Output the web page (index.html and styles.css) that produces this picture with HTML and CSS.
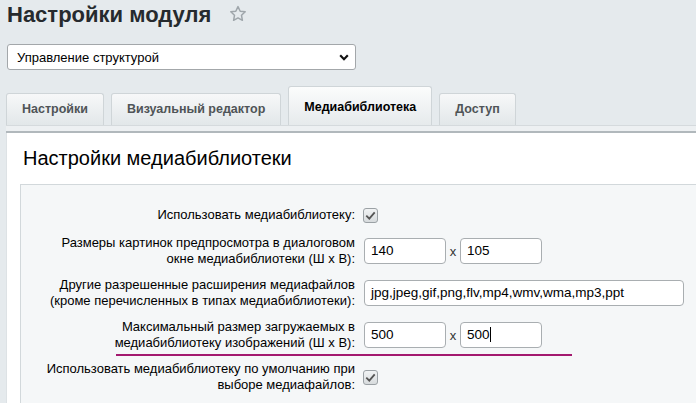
FILE: index.html
```html
<!DOCTYPE html>
<html lang="ru">
<head>
<meta charset="utf-8">
<title>Настройки модуля</title>
<link rel="stylesheet" href="styles.css">
</head>
<body>
<div class="page">
  <div class="title-row">
    <h1 class="title">Настройки модуля</h1>
    <svg class="star" width="18" height="18" viewBox="0 0 18 18" aria-hidden="true">
      <path d="M9 1.6l2.2 4.6 5 .6-3.7 3.5.9 5-4.4-2.4-4.4 2.4.9-5L1.8 6.8l5-.6z" fill="none" stroke="#9fa6ab" stroke-width="1.5" stroke-linejoin="round"/>
    </svg>
  </div>
  <div class="select">
    <span class="select-text">Управление структурой</span>
    <svg class="chevron" width="10" height="7" viewBox="0 0 10 7" aria-hidden="true">
      <path d="M1.2 1.3L5 5.2l3.8-3.9" fill="none" stroke="#111" stroke-width="2.2"/>
    </svg>
  </div>
  <div class="tabs">
    <div class="tab">Настройки</div>
    <div class="tab">Визуальный редактор</div>
    <div class="tab active">Медиабиблиотека</div>
    <div class="tab">Доступ</div>
  </div>
  <div class="tab-strip"></div>
  <div class="content">
    <h2 class="heading">Настройки медиабиблиотеки</h2>
    <div class="panel">
      <div class="row first">
        <div class="label">Использовать медиабиблиотеку:</div>
        <div class="value"><span class="checkbox"><svg width="11" height="9" viewBox="0 0 11 9"><path d="M1.3 4.6l3 3 5.4-6.2" fill="none" stroke="#555" stroke-width="1.8"/></svg></span></div>
      </div>
      <div class="row">
        <div class="label">Размеры картинок предпросмотра в диалоговом<br>окне медиабиблиотеки (Ш x В):</div>
        <div class="value"><span class="field small">140</span><span class="times">x</span><span class="field small">105</span></div>
      </div>
      <div class="row">
        <div class="label">Другие разрешенные расширения медиафайлов<br>(кроме перечисленных в типах медиабиблиотеки):</div>
        <div class="value"><span class="field wide">jpg,jpeg,gif,png,flv,mp4,wmv,wma,mp3,ppt</span></div>
      </div>
      <div class="row marked">
        <div class="label">Максимальный размер загружаемых в<br>медиабиблиотеку изображений (Ш x В):</div>
        <div class="value"><span class="field small">500</span><span class="times">x</span><span class="field small">500<span class="caret"></span></span></div>
        <span class="mark"></span>
      </div>
      <div class="row">
        <div class="label">Использовать медиабиблиотеку по умолчанию при<br>выборе медиафайлов:</div>
        <div class="value"><span class="checkbox"><svg width="11" height="9" viewBox="0 0 11 9"><path d="M1.3 4.6l3 3 5.4-6.2" fill="none" stroke="#555" stroke-width="1.8"/></svg></span></div>
      </div>
    </div>
  </div>
</div>
</body>
</html>
```
FILE: styles.css
```css
* { box-sizing: border-box; }
html, body { margin: 0; padding: 0; }
body {
  background: #e5eaed;
  font-family: "Liberation Sans", Arial, sans-serif;
  font-size: 13px;
  color: #000;
  height: 403px;
  overflow: hidden;
}
.page { padding-left: 6px; width: 720px; }

.title-row { display: flex; align-items: center; height: 30px; margin-left: 1px; }
.title {
  margin: 0;
  font-size: 22px;
  line-height: 30px;
  font-weight: bold;
  color: #262a2e;
}
.star { margin-left: 18px; margin-top: -2px; }

.select {
  margin: 14px 0 0 1px;
  width: 349px;
  height: 26px;
  background: #fff;
  border: 1px solid #a3a7aa;
  border-radius: 3px;
  display: flex;
  align-items: center;
  justify-content: space-between;
  padding: 0 6px 0 9px;
}
.select-text { font-size: 13px; color: #000; }

.tabs {
  margin-top: 16px;
  display: flex;
  align-items: flex-end;
  gap: 7px;
}
.tab {
  height: 32px;
  line-height: 31px;
  padding: 0 15px;
  border: 1px solid #cfd5d8;
  border-bottom: none;
  border-radius: 3px 3px 0 0;
  background: linear-gradient(#f7f8f9, #e2e7e9);
  font-weight: bold;
  font-size: 12.5px;
  color: #4f5457;
}
.tab.active {
  height: 39px;
  padding-top: 5px;
  background: linear-gradient(#fbfcfc, #e6eaec);
  color: #000;
}
.tab-strip {
  height: 8px;
  border-top: 1px solid #d5dadd;
  background: #edf0f2;
  border-bottom: 2px solid #b1b8bc;
}

.content {
  background: #fff;
  padding: 13px 0 0 13px;
  border-left: 1px solid #dde2e5;
}
.heading {
  margin: 0 0 14px 3px;
  font-size: 20px;
  line-height: 24px;
  font-weight: normal;
  color: #000;
}
.panel {
  background: #f5f7f8;
  border-top: 1px solid #d2d8db;
  border-left: 1px solid #d2d8db;
  padding-top: 15px;
  height: 219px;
}
.row {
  position: relative;
  display: flex;
  align-items: center;
  padding: 5px 0;
}
.row.first { padding: 7px 0; }
.label {
  width: 343px;
  padding-right: 9px;
  text-align: right;
  line-height: 16px;
  color: #000;
}
.value { display: flex; align-items: center; }
.field {
  display: inline-block;
  height: 26px;
  line-height: 24px;
  background: #fff;
  border: 1px solid #a9aeb1;
  border-radius: 4px;
  padding: 0 6px;
  color: #000;
  font-size: 13.5px;
  white-space: nowrap;
}
.field.small { width: 82px; }
.field.wide { width: 320px; }
.times { width: 14px; text-align: center; color: #333; }
.caret {
  display: inline-block;
  width: 1px;
  height: 15px;
  background: #000;
  vertical-align: -3px;
}
.checkbox {
  width: 15px;
  height: 15px;
  border: 1px solid #9ba1a5;
  border-radius: 3px;
  background: linear-gradient(#f1f3f4, #d7dbdd);
  display: flex;
  align-items: center;
  justify-content: center;
  margin-left: -1px;
}
.mark {
  position: absolute;
  left: 95px;
  top: 40px;
  width: 456px;
  height: 2px;
  background: #a3196f;
}
```
